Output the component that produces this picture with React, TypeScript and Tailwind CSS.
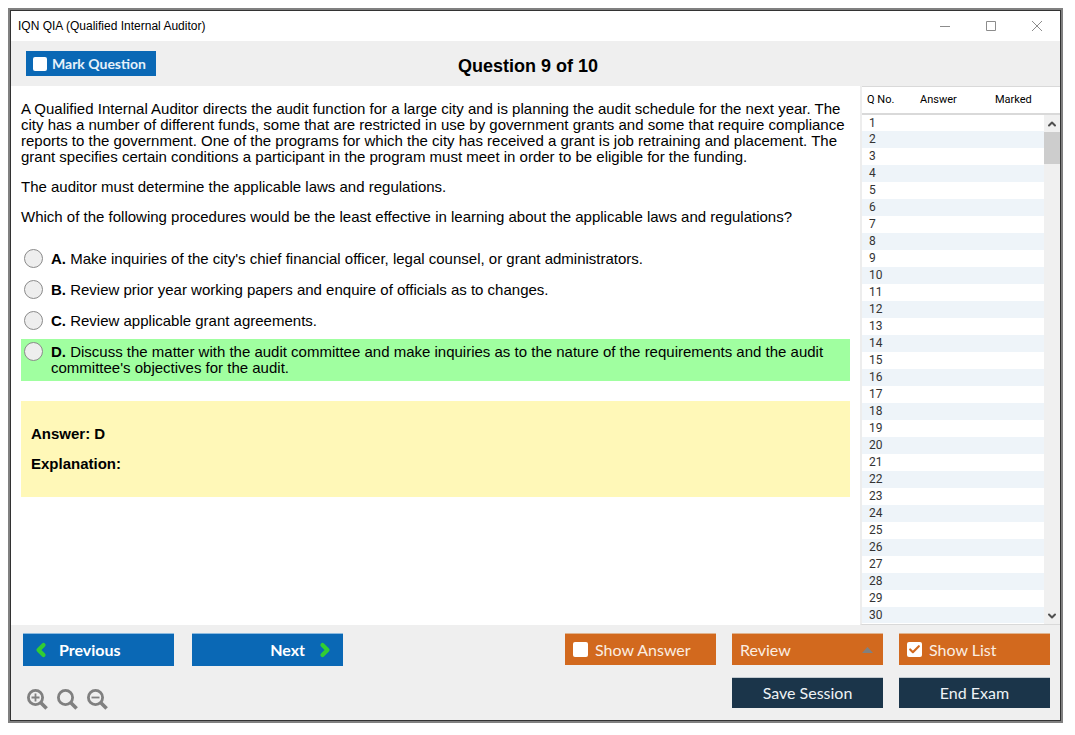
import { useState, type ReactNode } from "react";
import { Check, ChevronDown, ChevronLeft, ChevronRight, ChevronUp } from "lucide-react";

const options = [
  { id: "A", text: "Make inquiries of the city's chief financial officer, legal counsel, or grant administrators." },
  { id: "B", text: "Review prior year working papers and enquire of officials as to changes." },
  { id: "C", text: "Review applicable grant agreements." },
  {
    id: "D",
    text: "Discuss the matter with the audit committee and make inquiries as to the nature of the requirements and the audit committee's objectives for the audit.",
  },
];

const correct = "D";
const questions = Array.from({ length: 30 }, (_, i) => i + 1);

function Tick({ label, checked, onChange }: { label: string; checked: boolean; onChange: () => void }) {
  return (
    <label className="flex h-8 w-[151px] items-center gap-[7px] border-t border-[#e0b48f] bg-[#d2691e] px-2 text-[#fbeee2]">
      <span className="grid">
        <input
          type="checkbox"
          checked={checked}
          onChange={onChange}
          className="col-start-1 row-start-1 size-[15px] appearance-none rounded-[2px] bg-white"
        />
        {checked && (
          <Check size={13} strokeWidth={4} className="pointer-events-none col-start-1 row-start-1 place-self-center text-[#d2691e]" />
        )}
      </span>
      {label}
    </label>
  );
}

function Magnifier({ label, children }: { label: string; children?: ReactNode }) {
  return (
    <button aria-label={label} className="text-[#808080]">
      <svg width="21" height="21" viewBox="0 0 21 21" fill="none" stroke="currentColor" className="block">
        <circle cx="8.5" cy="8.5" r="7.1" strokeWidth="2.8" />
        <path d="M13.6 13.6 19.6 19.6" strokeWidth="3.6" />
        {children}
      </svg>
    </button>
  );
}

export default function App() {
  const [answer, setAnswer] = useState("");
  const [marked, setMarked] = useState(false);
  const [showAnswer, setShowAnswer] = useState(false);
  const [showList, setShowList] = useState(true);

  return (
    <div className="flex min-h-screen bg-white pt-2 pr-3 pb-3 pl-2 font-['Liberation_Sans',Arial,sans-serif] text-black">
      <div className="flex flex-1 border-2 border-[#808080]">
        <div className="flex flex-1 flex-col border border-[#333333]">
          {/* Title bar */}
          <div className="flex h-[30px] items-center justify-between pl-[7px]">
            <span className="text-xs">IQN QIA (Qualified Internal Auditor)</span>
            <div className="flex text-[#8c8c8c]">
              <button aria-label="Minimize" className="flex h-7 w-[46px] items-center justify-center">
                <svg width="10" height="11" viewBox="0 0 10 11" stroke="currentColor">
                  <path d="M0 5.5H10" />
                </svg>
              </button>
              <button aria-label="Maximize" className="flex h-7 w-[46px] items-center justify-center">
                <svg width="10" height="10" viewBox="0 0 10 10" fill="none" stroke="currentColor">
                  <path d="M.5.5H9.5V9.5H.5Z" />
                </svg>
              </button>
              <button aria-label="Close" className="flex h-7 w-[46px] items-center justify-center">
                <svg width="10" height="10" viewBox="0 0 10 10" stroke="currentColor">
                  <path d="M0 0 10 10M10 0 0 10" />
                </svg>
              </button>
            </div>
          </div>

          {/* Question header */}
          <header className="grid h-[45px] grid-cols-[1fr_auto_1fr] items-center bg-[#efefef] pr-[30px] pl-[15px]">
            <label className="flex h-[25px] w-[130px] items-center gap-[5px] bg-[#0a68b5] pl-[7px] font-[Lato,sans-serif] text-sm font-bold text-[#e6f1fa]">
              <input
                type="checkbox"
                checked={marked}
                onChange={() => setMarked(!marked)}
                className="size-[14px] appearance-none rounded-[2px] bg-white checked:bg-[#32cd32]"
              />
              Mark Question
            </label>
            <h1 className="pt-1 text-lg font-bold">Question 9 of 10</h1>
          </header>

          <div className="flex flex-1">
            {/* Question and options */}
            <main className="flex-1 px-[10px] pt-[15px] text-[15px] leading-4">
              <div className="space-y-[14px]">
                <p>
                  A Qualified Internal Auditor directs the audit function for a large city and is planning the audit
                  schedule for the next year. The city has a number of different funds, some that are restricted in use
                  by government grants and some that require compliance reports to the government. One of the programs
                  for which the city has received a grant is job retraining and placement. The grant specifies certain
                  conditions a participant in the program must meet in order to be eligible for the funding.
                </p>
                <p>The auditor must determine the applicable laws and regulations.</p>
                <p>
                  Which of the following procedures would be the least effective in learning about the applicable laws
                  and regulations?
                </p>
              </div>

              <div className="mt-[21px] space-y-[5px]">
                {options.map((o) => (
                  <label
                    key={o.id}
                    className={`flex items-start gap-2 py-[5px] pl-[3px] ${o.id === correct ? "bg-[#a0ffa0]" : ""}`}
                  >
                    <input
                      type="radio"
                      name="answer"
                      value={o.id}
                      checked={answer === o.id}
                      onChange={() => setAnswer(o.id)}
                      className="-my-[2px] size-[19px] shrink-0 appearance-none rounded-full border border-[#8a8a8a] bg-[#eeeeee] checked:border-[6px]"
                    />
                    <span>
                      <b>{`${o.id}.`}</b> {o.text}
                    </span>
                  </label>
                ))}
              </div>

              <div className="mt-5 space-y-[14px] bg-[#fff8b8] px-[10px] py-[25px] font-bold">
                <p>{`Answer: ${correct}`}</p>
                <p>Explanation:</p>
              </div>
            </main>

            {/* Question list */}
            {showList && (
              <aside className="flex w-[200px] border-b border-l-2 border-b-[#d9d9d9] border-l-[#ededed] font-[Roboto,sans-serif] text-[11px]">
                <table className="flex-1 self-start text-left text-[#333333]">
                  <thead>
                    <tr className="h-[27px] border-t border-b-2 border-[#d9d9d9] text-black">
                      <th className="w-[58px] pl-[5px] font-normal">Q No.</th>
                      <th className="w-[75px] font-normal">Answer</th>
                      <th className="font-normal">Marked</th>
                    </tr>
                  </thead>
                  <tbody className="text-xs">
                    {questions.map((n) => (
                      <tr key={n} className="h-[17px] leading-4 last:h-4 even:bg-[#eef4f9]">
                        <td className="pl-[7px]">{n}</td>
                        <td></td>
                        <td></td>
                      </tr>
                    ))}
                  </tbody>
                </table>
                <div className="flex w-4 flex-col">
                  <div className="h-[29px] border-t border-b-2 border-[#d9d9d9]"></div>
                  <div className="flex flex-1 flex-col items-center justify-between bg-[#f0f0f0] pb-[2px] text-[#505050]">
                    <div className="flex w-full flex-col items-center">
                      <span className="flex h-[17px] items-center">
                        <ChevronUp size={12} strokeWidth={4} />
                      </span>
                      <span className="h-8 w-full bg-[#cdcdcd]"></span>
                    </div>
                    <ChevronDown size={12} strokeWidth={4} />
                  </div>
                </div>
              </aside>
            )}
          </div>

          {/* Footer */}
          <footer className="flex h-[95px] justify-between bg-[#efefef] pt-2 pr-[10px] pl-3 font-[Lato,sans-serif] text-base">
            <div>
              <div className="flex gap-[18px] font-bold text-white">
                <button className="flex h-[33px] w-[151px] items-center gap-2 border-t border-[#8dbbe0] bg-[#0a68b5] pl-2">
                  <ChevronLeft size={20} strokeWidth={5} className="text-[#32cd32]" />
                  Previous
                </button>
                <button className="flex h-[33px] w-[151px] items-center justify-end gap-[10px] border-t border-[#8dbbe0] bg-[#0a68b5] pr-2">
                  Next
                  <ChevronRight size={20} strokeWidth={5} className="text-[#32cd32]" />
                </button>
              </div>
              <div className="mt-[23px] flex gap-[9px] pl-1">
                <Magnifier label="Zoom in">
                  <path d="M4.5 8.5H12.5M8.5 4.5V12.5" strokeWidth="1.8" />
                </Magnifier>
                <Magnifier label="Reset zoom" />
                <Magnifier label="Zoom out">
                  <path d="M4.5 8.5H12.5" strokeWidth="1.8" />
                </Magnifier>
              </div>
            </div>

            <div className="flex flex-col items-end gap-3">
              <div className="flex gap-4">
                <Tick label="Show Answer" checked={showAnswer} onChange={() => setShowAnswer(!showAnswer)} />
                <button
                  aria-haspopup="menu"
                  className="flex h-8 w-[151px] items-center justify-between border-t border-[#e0b48f] bg-[#d2691e] pr-[10px] pl-2 text-[#fbeee2]"
                >
                  Review
                  <svg width="11" height="6" viewBox="0 0 11 6" fill="#808080">
                    <path d="M5.5 0 11 6H0Z" />
                  </svg>
                </button>
                <Tick label="Show List" checked={showList} onChange={() => setShowList(!showList)} />
              </div>
              <div className="flex gap-4 text-[#eef2f5]">
                <button className="h-[31px] w-[151px] border-t border-[#c3cad0] bg-[#1b354a]">Save Session</button>
                <button className="h-[31px] w-[151px] border-t border-[#c3cad0] bg-[#1b354a]">End Exam</button>
              </div>
            </div>
          </footer>
        </div>
      </div>
    </div>
  );
}
